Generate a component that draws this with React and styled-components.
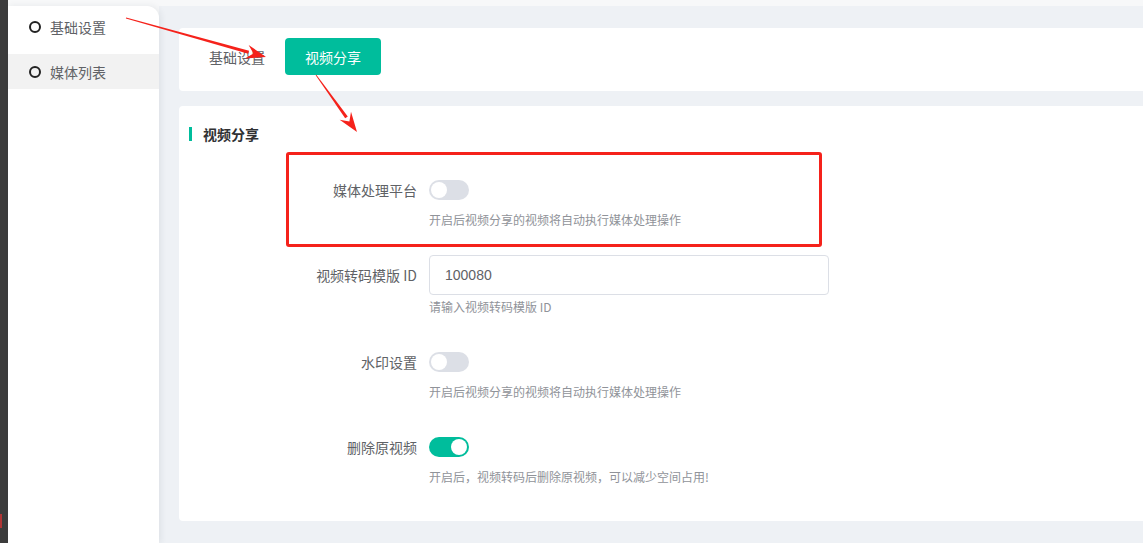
import React from "react";
import styled, { createGlobalStyle } from "styled-components";

const GlobalStyle = createGlobalStyle`
  html, body {
    margin: 0;
    padding: 0;
    overflow: hidden;
    background: #f7f8f9;
    font-family: "Noto Sans CJK SC", "Noto Sans", "Liberation Sans", sans-serif;
  }
  * { box-sizing: border-box; }
`;

const Page = styled.div`
  position: relative;
  display: flex;
  width: 1143px;
  height: 543px;
`;

const DarkStrip = styled.div`
  position: relative;
  width: 8px;
  flex-shrink: 0;
  background: #3c3c3c;
  &::after {
    content: "";
    position: absolute;
    left: 0;
    top: 514px;
    width: 2px;
    height: 14px;
    background: #b03535;
  }
`;

const Body = styled.div`
  flex: 1;
  display: flex;
  margin-top: 6px;
`;

const Sidebar = styled.div`
  width: 151px;
  flex-shrink: 0;
  background: #fff;
  border-top-right-radius: 12px;
  padding-top: 3px;
  box-shadow: 2px 0 6px rgba(40, 50, 70, 0.08);
  z-index: 1;
`;

const NavItem = styled.div`
  display: flex;
  align-items: center;
  gap: 9px;
  height: 35px;
  padding-left: 21px;
  margin-bottom: 10px;
  font-size: 14px;
  color: #606266;
  background: ${(p) => (p.$active ? "#f2f2f2" : "transparent")};
`;

const Dot = styled.span`
  width: 12px;
  height: 12px;
  border: 2px solid #222;
  border-radius: 50%;
`;

const Main = styled.div`
  flex: 1;
  background: #eef1f5;
  padding: 22px 0 0 20px;
  display: flex;
  flex-direction: column;
  gap: 15px;
`;

const Card = styled.div`
  background: #fff;
  border-radius: 4px 0 0 4px;
`;

const TabCard = styled(Card)`
  height: 63px;
  display: flex;
  align-items: flex-start;
  padding: 10px 10px 0;
`;

const Tab = styled.div`
  height: 37px;
  padding: 0 20px;
  display: flex;
  align-items: center;
  font-size: 14px;
  border-radius: 4px;
  color: ${(p) => (p.$active ? "#fff" : "#606266")};
  background: ${(p) => (p.$active ? "#00bd9c" : "transparent")};
`;

const FormCard = styled(Card)`
  padding: 20px 10px 34px;
`;

const Title = styled.div`
  display: flex;
  align-items: center;
  gap: 11px;
  height: 16px;
  font-size: 14px;
  font-weight: 700;
  color: #303133;
  &::before {
    content: "";
    width: 3px;
    height: 14px;
    background: #00bd9c;
  }
`;

const Form = styled.div`
  margin-top: 28px;
  padding-left: 110px;
  display: flex;
  flex-direction: column;
  gap: 25px;
`;

const Item = styled.div`
  display: grid;
  grid-template-columns: 130px 1fr;
`;

const Label = styled.div`
  height: 40px;
  line-height: 40px;
  text-align: right;
  padding-right: 12px;
  font-size: 14px;
  color: #606266;
`;

const Control = styled.div`
  display: flex;
  flex-direction: column;
  align-items: flex-start;
`;

const Line = styled.div`
  height: 40px;
  display: flex;
  align-items: center;
`;

const Switch = styled.span`
  position: relative;
  width: 40px;
  height: 20px;
  border-radius: 10px;
  background: ${(p) => (p.$on ? "#00bd9c" : "#dcdfe6")};
  &::after {
    content: "";
    position: absolute;
    top: 2px;
    left: ${(p) => (p.$on ? "22px" : "2px")};
    width: 16px;
    height: 16px;
    border-radius: 50%;
    background: #fff;
  }
`;

const Input = styled.div`
  width: 400px;
  height: 40px;
  border: 1px solid #dcdfe6;
  border-radius: 4px;
  padding-left: 15px;
  display: flex;
  align-items: center;
  font-family: "Liberation Sans", "Noto Sans CJK SC", sans-serif;
  font-size: 14px;
  color: #606266;
`;

const Help = styled.div`
  margin-top: ${(p) => p.$gap || 0}px;
  line-height: 20px;
  font-size: 12px;
  color: #909399;
`;

const Highlight = styled.div`
  position: absolute;
  left: 286px;
  top: 152px;
  width: 536px;
  height: 95px;
  border: 3px solid #f5221b;
  border-radius: 3px;
  pointer-events: none;
  z-index: 2;
`;

const Arrows = styled.svg`
  position: absolute;
  left: 0;
  top: 0;
  pointer-events: none;
  z-index: 3;
`;

function Arrow({ x1, y1, x2, y2 }) {
  const dx = x2 - x1;
  const dy = y2 - y1;
  const len = Math.hypot(dx, dy);
  const ux = dx / len;
  const uy = dy / len;
  const px = -uy;
  const py = ux;
  const hl = 18;
  const hw = 7;
  const bx = x2 - ux * hl;
  const by = y2 - uy * hl;
  const shaft = [
    [x1 + px * 0.4, y1 + py * 0.4],
    [bx + px * 1.6, by + py * 1.6],
    [bx - px * 1.6, by - py * 1.6],
    [x1 - px * 0.4, y1 - py * 0.4],
  ];
  const head = [
    [x2, y2],
    [bx + px * hw - ux * 2, by + py * hw - uy * 2],
    [bx + ux * 5, by + uy * 5],
    [bx - px * hw - ux * 2, by - py * hw - uy * 2],
  ];
  const pts = (a) => a.map((p) => p.join(",")).join(" ");
  return (
    <>
      <polygon points={pts(shaft)} fill="#f5221b" />
      <polygon points={pts(head)} fill="#f5221b" />
    </>
  );
}

const fields = [
  { label: "媒体处理平台", type: "switch", on: false, help: "开启后视频分享的视频将自动执行媒体处理操作" },
  { label: "视频转码模版 ID", type: "input", value: "100080", help: "请输入视频转码模版 ID" },
  { label: "水印设置", type: "switch", on: false, help: "开启后视频分享的视频将自动执行媒体处理操作" },
  { label: "删除原视频", type: "switch", on: true, help: "开启后，视频转码后删除原视频，可以减少空间占用!" },
];

export default function App() {
  return (
    <>
      <GlobalStyle />
      <Page>
        <DarkStrip />
        <Body>
          <Sidebar>
            <NavItem>
              <Dot />
              基础设置
            </NavItem>
            <NavItem $active>
              <Dot />
              媒体列表
            </NavItem>
          </Sidebar>
          <Main>
            <TabCard>
              <Tab>基础设置</Tab>
              <Tab $active>视频分享</Tab>
            </TabCard>
            <FormCard>
              <Title>视频分享</Title>
              <Form>
                {fields.map((f) => (
                  <Item key={f.label}>
                    <Label>{f.label}</Label>
                    <Control>
                      <Line>
                        {f.type === "switch" ? (
                          <Switch $on={f.on} />
                        ) : (
                          <Input>{f.value}</Input>
                        )}
                      </Line>
                      <Help $gap={f.type === "input" ? 2 : 0}>{f.help}</Help>
                    </Control>
                  </Item>
                ))}
              </Form>
            </FormCard>
          </Main>
        </Body>
        <Highlight />
        <Arrows width="1143" height="543">
          <Arrow x1={126} y1={18} x2={266} y2={57} />
          <Arrow x1={316} y1={75} x2={357} y2={132} />
        </Arrows>
      </Page>
    </>
  );
}
